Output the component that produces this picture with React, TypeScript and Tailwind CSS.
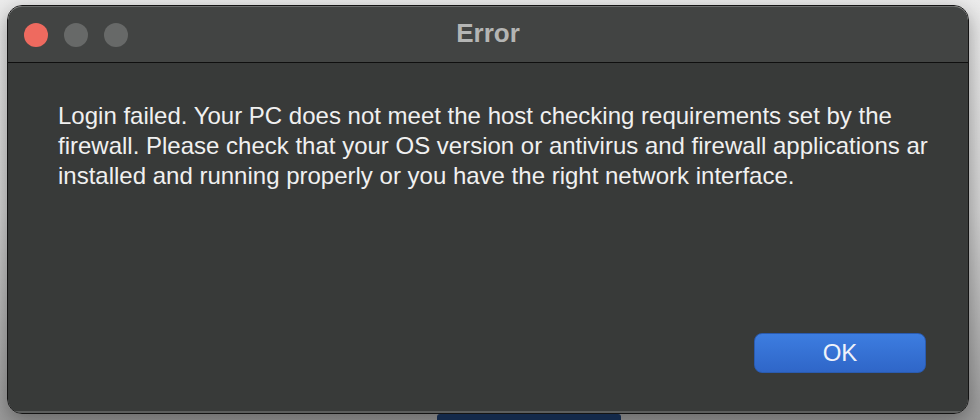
const lines = [
  'Login failed. Your PC does not meet the host checking requirements set by the',
  'firewall. Please check that your OS version or antivirus and firewall applications ar',
  'installed and running properly or you have the right network interface.',
]

const App = () => {
  return (
    <div
      className="w-[980px] h-[420px] overflow-hidden bg-gradient-to-b from-[#ececec] via-[#d2d2d2] to-[#9a9a9a] pt-[5px]"
      style={{ fontFamily: '"Liberation Sans", Arial, sans-serif' }}
    >
      <div className="ml-[7px] w-[962px] h-[409px] rounded-[15px] border border-[#141414] shadow-[0_6px_20px_rgba(0,0,0,0.35)] flex flex-col overflow-hidden">
        <div className="h-[57px] shrink-0 bg-[#424443] border-t border-[#6c6e6d] rounded-t-[14px] flex items-center relative border-b border-b-[#0f0f0f]">
          <div className="flex gap-4 pl-[16px]">
            <span className="w-6 h-6 rounded-full bg-[#ee6a5f]" />
            <span className="w-6 h-6 rounded-full bg-[#676968]" />
            <span className="w-6 h-6 rounded-full bg-[#676968]" />
          </div>
          <div className="absolute inset-0 flex items-center justify-center pb-[3px]">
            <span className="text-[26px] font-bold text-[#b4b5b4]">Error</span>
          </div>
        </div>
        <div className="flex-1 bg-[#383a39] flex flex-col pt-[38px] pb-[38px] border-b-2 border-[#5c5e5d]">
          <div className="px-[50px] text-[24px] leading-[30px] text-[#f0f0f0]">
            {lines.map((line) => (
              <div key={line} className="whitespace-nowrap">
                {line}
              </div>
            ))}
          </div>
          <div className="mt-auto flex justify-end pr-[42px]">
            <button className="w-[172px] h-[40px] rounded-[8px] bg-gradient-to-b from-[#3d7de0] to-[#2f66c8] text-[24px] text-[#eef2fa] border border-[#2a5bb0]">
              OK
            </button>
          </div>
        </div>
      </div>
      <div className="ml-[437px] w-[184px] h-[6px] rounded-t-[3px] bg-[#13294a]" />
    </div>
  )
}

export default App
